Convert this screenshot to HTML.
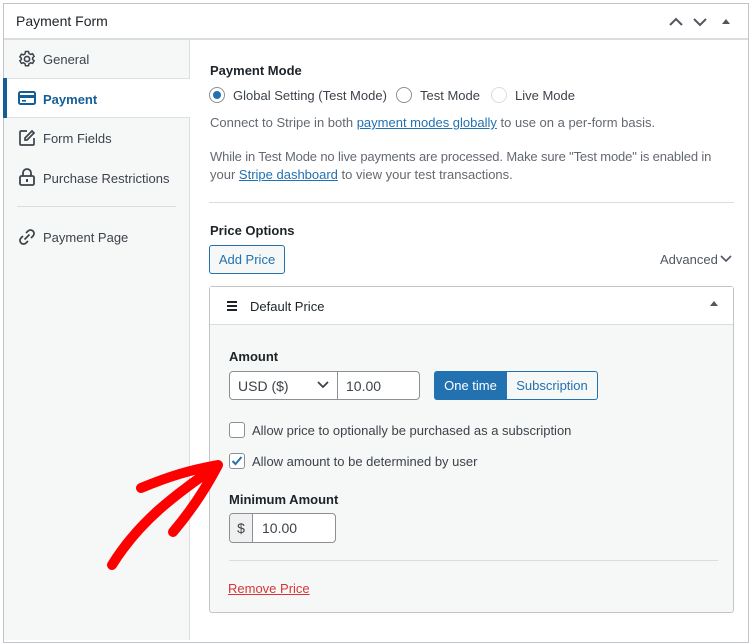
<!DOCTYPE html>
<html><head><style>
*{box-sizing:border-box;margin:0;padding:0}
body{width:750px;height:637px;background:#fff;font-family:"Liberation Sans",sans-serif;color:#3c434a;font-size:13px;position:relative;overflow:hidden}
.a{position:absolute}
.t{position:absolute;white-space:nowrap}
a{color:#2271b1;text-decoration:underline}
</style></head><body>
<div class="a" style="left:3px;top:3px;width:746px;height:640px;border:1px solid #c3c4c7;background:#fff"></div>
<div class="a" style="left:4px;top:38px;width:744px;height:2px;background:#dcdcde"></div>
<div class="t" style="left:16px;top:13px;font-size:14px;color:#1d2327">Payment Form</div>
<svg class="a" style="left:665px;top:12px" width="85" height="20"><path d="M5 13l6-6 6 6" stroke="#50575e" stroke-width="2" fill="none"/><path d="M29 7l6 6 6-6" stroke="#50575e" stroke-width="2" fill="none"/><path d="M57 12l4-5 4 5z" fill="#50575e"/></svg>
<div class="a" style="left:4px;top:40px;width:186px;height:600px;background:#f6f7f7;border-right:1px solid #dcdcde"></div>
<div class="a" style="left:4px;top:78px;width:186px;height:40px;background:#fff;border-top:1px solid #e0e0e0;border-bottom:1px solid #e0e0e0"></div>
<div class="a" style="left:3px;top:78px;width:4px;height:40px;background:#135e96"></div>
<svg class="a" style="left:18px;top:50px" width="18" height="18" viewBox="0 0 18 18"><circle cx="9" cy="9" r="2.6" stroke="#3c434a" stroke-width="1.6" fill="none"/><path d="M7.5 1.5h3l.5 2 1.6.9 2-.6 1.5 2.6-1.5 1.4v1.6l1.5 1.4-1.5 2.6-2-.6-1.6.9-.5 2h-3l-.5-2-1.6-.9-2 .6-1.5-2.6 1.5-1.4V8.2L1.9 6.8l1.5-2.6 2 .6 1.6-.9z" stroke="#3c434a" stroke-width="1.5" fill="none"/></svg>
<div class="t" style="left:43px;top:52px">General</div>
<svg class="a" style="left:18px;top:91px" width="18" height="14"><rect x="1" y="1" width="16" height="12" rx="1.5" stroke="#135e96" stroke-width="2" fill="none"/><rect x="1" y="4" width="16" height="3" fill="#135e96"/><rect x="4" y="9" width="4" height="1.6" fill="#135e96"/></svg>
<div class="t" style="left:43px;top:92px;font-weight:bold;color:#135e96">Payment</div>
<svg class="a" style="left:18px;top:129px" width="18" height="18"><path d="M9 2H3a1 1 0 0 0-1 1v12a1 1 0 0 0 1 1h12a1 1 0 0 0 1-1V9" stroke="#3c434a" stroke-width="1.7" fill="none"/><path d="M14 2l2 2-7 7H7V9z" stroke="#3c434a" stroke-width="1.7" fill="none"/></svg>
<div class="t" style="left:43px;top:131px">Form Fields</div>
<svg class="a" style="left:18px;top:168px" width="18" height="18"><path d="M5 8V5a4 4 0 0 1 8 0v3" stroke="#3c434a" stroke-width="1.8" fill="none"/><rect x="2" y="8" width="14" height="9" rx="1.5" stroke="#3c434a" stroke-width="1.8" fill="none"/><rect x="8" y="11" width="2" height="3" fill="#3c434a"/></svg>
<div class="t" style="left:43px;top:171px">Purchase Restrictions</div>
<div class="a" style="left:17px;top:206px;width:159px;height:1px;background:#dcdcde"></div>
<svg class="a" style="left:18px;top:228px" width="18" height="18"><path d="M8 5l2-2a3.5 3.5 0 0 1 5 5l-2 2M10 13l-2 2a3.5 3.5 0 0 1-5-5l2-2M6.5 11.5l5-5" stroke="#3c434a" stroke-width="1.7" fill="none"/></svg>
<div class="t" style="left:43px;top:230px">Payment Page</div>

<div class="t" style="left:210px;top:63px;font-weight:bold;color:#1d2327">Payment Mode</div>
<div class="a" style="left:209px;top:87px;width:16px;height:16px;border:1px solid #8c8f94;border-radius:50%;background:#fff"></div>
<div class="a" style="left:213px;top:91px;width:8px;height:8px;border-radius:50%;background:#2271b1"></div>
<div class="t" style="left:233px;top:88px">Global Setting (Test Mode)</div>
<div class="a" style="left:396px;top:87px;width:16px;height:16px;border:1px solid #8c8f94;border-radius:50%"></div>
<div class="t" style="left:420px;top:88px">Test Mode</div>
<div class="a" style="left:491px;top:87px;width:16px;height:16px;border:1px solid #dcdcde;border-radius:50%"></div>
<div class="t" style="left:515px;top:88px">Live Mode</div>
<div class="t" style="left:210px;top:115px;color:#646970">Connect to Stripe in both <a>payment modes globally</a> to use on a per-form basis.</div>
<div class="t" style="left:210px;top:149px;color:#646970;letter-spacing:-0.15px">While in Test Mode no live payments are processed. Make sure "Test mode" is enabled in</div>
<div class="t" style="left:210px;top:167px;color:#646970">your <a>Stripe dashboard</a> to view your test transactions.</div>
<div class="a" style="left:209px;top:202px;width:525px;height:1px;background:#dcdcde"></div>
<div class="t" style="left:210px;top:223px;font-weight:bold;color:#1d2327">Price Options</div>
<div class="a" style="left:209px;top:245px;width:76px;height:29px;border:1px solid #2271b1;border-radius:3px;background:#f6f7f7;color:#2271b1;text-align:center;line-height:27px">Add Price</div>
<div class="t" style="left:660px;top:252px;color:#50575e">Advanced</div>
<svg class="a" style="left:720px;top:254px" width="12" height="10"><path d="M1 2l5 5 5-5" stroke="#50575e" stroke-width="1.6" fill="none"/></svg>

<div class="a" style="left:209px;top:286px;width:525px;height:327px;border:1px solid #c3c4c7;border-radius:3px;background:#f6f7f7"></div>
<div class="a" style="left:210px;top:287px;width:523px;height:38px;background:#fff;border-bottom:1px solid #dcdcde"></div>
<div class="a" style="left:227px;top:301px;width:10px;height:2px;background:#1d2327;box-shadow:0 4px 0 #1d2327,0 8px 0 #1d2327"></div>
<div class="t" style="left:250px;top:299px;color:#1d2327">Default Price</div>
<svg class="a" style="left:709px;top:300px" width="10" height="8"><path d="M1 6l4-5 4 5z" fill="#50575e"/></svg>
<div class="t" style="left:229px;top:349px;font-weight:bold;color:#1d2327">Amount</div>
<div class="a" style="left:229px;top:371px;width:109px;height:29px;border:1px solid #8c8f94;border-radius:4px 0 0 4px;background:#fff"></div>
<div class="t" style="left:238px;top:378px;font-size:14px">USD ($)</div>
<svg class="a" style="left:317px;top:381px" width="12" height="8"><path d="M1 1l5 5 5-5" stroke="#3c434a" stroke-width="1.8" fill="none"/></svg>
<div class="a" style="left:337px;top:371px;width:83px;height:29px;border:1px solid #8c8f94;border-radius:0 4px 4px 0;background:#fff"></div>
<div class="t" style="left:346px;top:378px;font-size:14px">10.00</div>
<div class="a" style="left:434px;top:371px;width:73px;height:29px;background:#2271b1;border-radius:3px 0 0 3px;color:#fff;text-align:center;line-height:29px">One time</div>
<div class="a" style="left:506px;top:371px;width:92px;height:29px;border:1px solid #2271b1;border-radius:0 3px 3px 0;background:#f6f7f7;color:#2271b1;text-align:center;line-height:27px">Subscription</div>
<div class="a" style="left:229px;top:422px;width:16px;height:16px;border:1px solid #8c8f94;border-radius:3px;background:#fff"></div>
<div class="t" style="left:252px;top:423px">Allow price to optionally be purchased as a subscription</div>
<div class="a" style="left:229px;top:453px;width:16px;height:16px;border:1px solid #8c8f94;border-radius:3px;background:#fff"></div>
<svg class="a" style="left:229px;top:453px" width="16" height="16"><path d="M3.5 8l3 3 6-7" stroke="#2271b1" stroke-width="2" fill="none"/></svg>
<div class="t" style="left:252px;top:454px">Allow amount to be determined by user</div>
<div class="t" style="left:229px;top:492px;font-weight:bold;color:#1d2327">Minimum Amount</div>
<div class="a" style="left:229px;top:513px;width:107px;height:30px;border:1px solid #8c8f94;border-radius:4px;background:#fff"></div>
<div class="a" style="left:230px;top:514px;width:23px;height:28px;background:#f0f0f1;border-right:1px solid #8c8f94;border-radius:3px 0 0 3px;text-align:center;line-height:28px;font-size:14px">$</div>
<div class="t" style="left:262px;top:520px;font-size:14px">10.00</div>
<div class="a" style="left:229px;top:560px;width:489px;height:1px;background:#dcdcde"></div>
<div class="t" style="left:228px;top:581px;color:#d63638"><a style="color:#d63638">Remove Price</a></div>

<svg class="a" style="left:0;top:0" width="750" height="637"><path d="M112 565C140 520 175 495 218 465M141 488C170 476 190 470 218 465C206 488 190 512 173 532" stroke="#f00" stroke-width="10" stroke-linecap="round" stroke-linejoin="round" fill="none"/></svg>
</body></html>
